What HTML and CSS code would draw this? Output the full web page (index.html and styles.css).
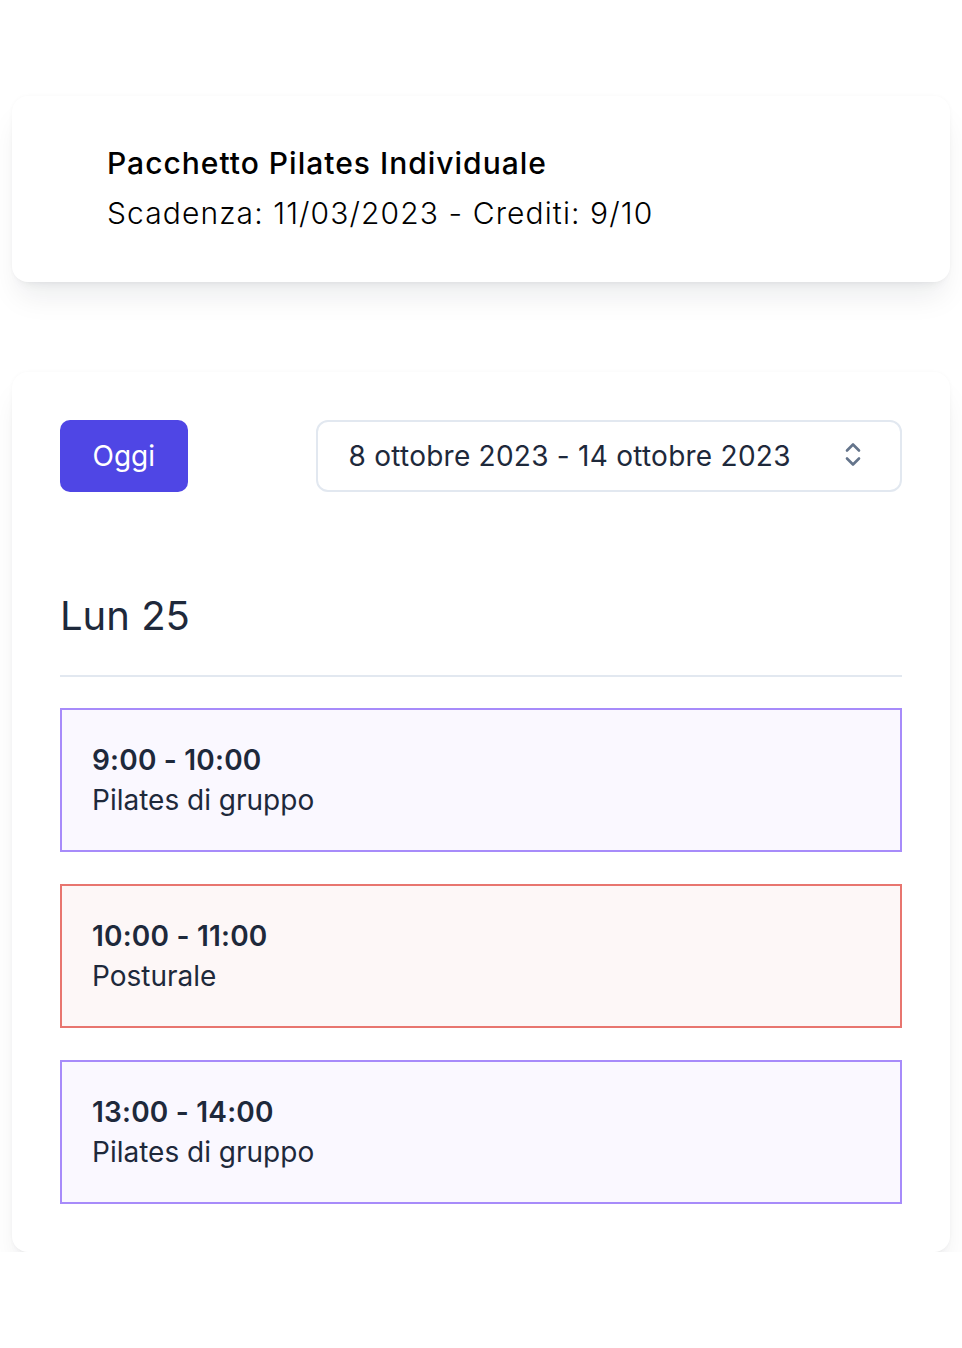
FILE: index.html
```html
<!DOCTYPE html>
<html lang="it">
<head>
<meta charset="utf-8">
<title>Pacchetto</title>
<link rel="stylesheet" href="styles.css">
</head>
<body>
<main class="page">
  <section class="card package">
    <h1 class="package-title">Pacchetto Pilates Individuale</h1>
    <p class="package-meta">Scadenza: 11/03/2023 - Crediti: 9/10</p>
  </section>

  <section class="card calendar">
    <div class="toolbar">
      <button class="btn-today">Oggi</button>
      <div class="week-select">
        <span class="week-label">8 ottobre 2023 - 14 ottobre 2023</span>
        <svg class="chevrons" width="20" height="28" viewBox="0 0 20 28" aria-hidden="true">
          <path d="M4 8.5 L10 2.5 L16 8.5" fill="none" stroke="#64748b" stroke-width="2.6" stroke-linecap="round" stroke-linejoin="round"/>
          <path d="M4 16.5 L10 22.5 L16 16.5" fill="none" stroke="#64748b" stroke-width="2.6" stroke-linecap="round" stroke-linejoin="round"/>
        </svg>
      </div>
    </div>

    <h2 class="day-title">Lun 25</h2>
    <hr class="divider">

    <div class="events">
      <div class="event event-violet">
        <div class="event-time">9:00 - 10:00</div>
        <div class="event-name">Pilates di gruppo</div>
      </div>
      <div class="event event-red">
        <div class="event-time">10:00 - 11:00</div>
        <div class="event-name">Posturale</div>
      </div>
      <div class="event event-violet">
        <div class="event-time">13:00 - 14:00</div>
        <div class="event-name">Pilates di gruppo</div>
      </div>
    </div>
  </section>
</main>
</body>
</html>
```

FILE: styles.css
```css
* { box-sizing: border-box; }

html, body {
  margin: 0;
  padding: 0;
  background: #ffffff;
}

body {
  font-family: Inter, "Noto Sans", sans-serif;
  color: #1e293b;
}

.page {
  padding: 96px 12px 0;
  display: flex;
  flex-direction: column;
  gap: 90px;
}

.card {
  background: #ffffff;
  border-radius: 16px;
  box-shadow: 0 20px 30px -6px rgba(15, 23, 42, 0.08), 0 8px 12px -8px rgba(15, 23, 42, 0.08), 0 0 4px rgba(15, 23, 42, 0.03);
}

.package {
  padding: 42px 95px 44px;
}

.package-title {
  margin: 0;
  font-size: 30px;
  line-height: 50px;
  font-weight: 500;
  letter-spacing: 1px;
  color: #000000;
}

.package-meta {
  margin: 0;
  font-size: 30px;
  line-height: 50px;
  font-weight: 300;
  letter-spacing: 1.1px;
  color: #000000;
}

.calendar {
  padding: 48px;
}

.toolbar {
  display: flex;
  align-items: center;
  gap: 128px;
}

.btn-today {
  height: 72px;
  padding: 0 32.5px;
  border: none;
  border-radius: 10px;
  background: #4f46e5;
  color: #ffffff;
  font-family: Inter, "Noto Sans", sans-serif;
  font-size: 28px;
  line-height: 40px;
  font-weight: 400;
}

.week-select {
  flex: 1;
  height: 72px;
  display: flex;
  align-items: center;
  justify-content: space-between;
  padding: 0 37px 0 31px;
  border: 2px solid #e2e8f0;
  border-radius: 12px;
}

.week-label {
  font-size: 28px;
  line-height: 40px;
  letter-spacing: 0.25px;
  color: #1e293b;
}

.chevrons { display: block; }

.day-title {
  margin: 94px 0 0;
  font-size: 40px;
  line-height: 60px;
  font-weight: 400;
  color: #1e293b;
}

.divider {
  margin: 29px 0 0;
  border: none;
  border-top: 2px solid #e2e8f0;
}

.events {
  margin-top: 31px;
  display: flex;
  flex-direction: column;
  gap: 32px;
}

.event {
  padding: 30px;
  border: 2px solid;
}

.event-violet {
  border-color: #a78bfa;
  background: #faf8ff;
}

.event-red {
  border-color: #e8756f;
  background: #fdf7f7;
}

.event-time {
  font-size: 28px;
  line-height: 40px;
  font-weight: 600;
  letter-spacing: 0.2px;
  color: #1e293b;
}

.event-name {
  font-size: 28px;
  line-height: 40px;
  font-weight: 400;
  color: #1e293b;
}
```
